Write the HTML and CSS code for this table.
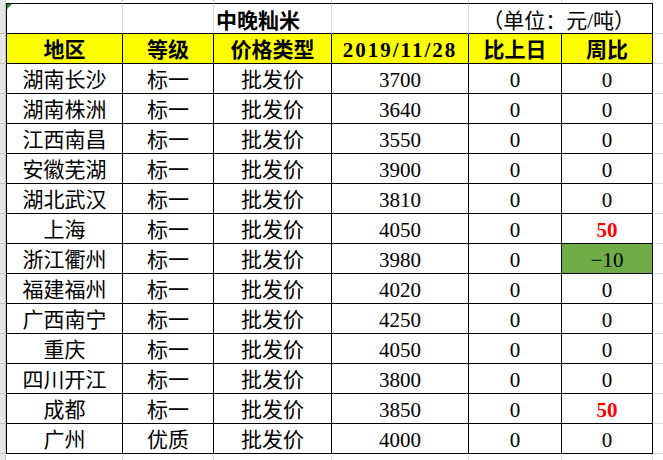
FILE: index.html
```html
<!DOCTYPE html>
<html lang="zh-CN">
<head>
<meta charset="utf-8">
<title>中晚籼米</title>
<link rel="stylesheet" href="styles.css">
</head>
<body>
<div class="sheet">
<table class="grid">
<colgroup>
<col class="c-strip"><col class="c-a"><col class="c-b"><col class="c-c"><col class="c-d"><col class="c-e"><col class="c-f"><col class="c-ext">
</colgroup>
<tr class="pre"><td class="strip"></td><td class="ca"></td><td></td><td></td><td></td><td></td><td></td><td class="ext"></td></tr>
<tr class="title"><td class="strip"></td><td class="ca flag"></td><td></td><td class="title-cell">中晚籼米</td><td></td><td colspan="2" class="unit">（单位：元/吨）</td><td class="ext"></td></tr>
<tr class="head"><td class="strip"></td><td class="ca">地区</td><td>等级</td><td>价格类型</td><td class="date">2019/11/28</td><td>比上日</td><td>周比</td><td class="ext"></td></tr>
<tr><td class="strip"></td><td class="ca">湖南长沙</td><td>标一</td><td>批发价</td><td>3700</td><td>0</td><td>0</td><td class="ext"></td></tr>
<tr><td class="strip"></td><td class="ca">湖南株洲</td><td>标一</td><td>批发价</td><td>3640</td><td>0</td><td>0</td><td class="ext"></td></tr>
<tr><td class="strip"></td><td class="ca">江西南昌</td><td>标一</td><td>批发价</td><td>3550</td><td>0</td><td>0</td><td class="ext"></td></tr>
<tr><td class="strip"></td><td class="ca">安徽芜湖</td><td>标一</td><td>批发价</td><td>3900</td><td>0</td><td>0</td><td class="ext"></td></tr>
<tr><td class="strip"></td><td class="ca">湖北武汉</td><td>标一</td><td>批发价</td><td>3810</td><td>0</td><td>0</td><td class="ext"></td></tr>
<tr><td class="strip"></td><td class="ca">上海</td><td>标一</td><td>批发价</td><td>4050</td><td>0</td><td class="up">50</td><td class="ext"></td></tr>
<tr><td class="strip"></td><td class="ca">浙江衢州</td><td>标一</td><td>批发价</td><td>3980</td><td>0</td><td class="down">−10</td><td class="ext"></td></tr>
<tr><td class="strip"></td><td class="ca">福建福州</td><td>标一</td><td>批发价</td><td>4020</td><td>0</td><td>0</td><td class="ext"></td></tr>
<tr><td class="strip"></td><td class="ca">广西南宁</td><td>标一</td><td>批发价</td><td>4250</td><td>0</td><td>0</td><td class="ext"></td></tr>
<tr><td class="strip"></td><td class="ca">重庆</td><td>标一</td><td>批发价</td><td>4050</td><td>0</td><td>0</td><td class="ext"></td></tr>
<tr><td class="strip"></td><td class="ca">四川开江</td><td>标一</td><td>批发价</td><td>3800</td><td>0</td><td>0</td><td class="ext"></td></tr>
<tr><td class="strip"></td><td class="ca">成都</td><td>标一</td><td>批发价</td><td>3850</td><td>0</td><td class="up">50</td><td class="ext"></td></tr>
<tr><td class="strip"></td><td class="ca">广州</td><td>优质</td><td>批发价</td><td>4000</td><td>0</td><td>0</td><td class="ext"></td></tr>
<tr class="post"><td class="strip"></td><td class="ca"></td><td></td><td></td><td></td><td></td><td></td><td class="ext"></td></tr>
</table>
</div>
</body>
</html>
```
FILE: styles.css
```css
html, body {
  margin: 0;
  padding: 0;
  background: #ffffff;
}

.sheet {
  width: 663px;
  height: 460px;
  overflow: hidden;
}

.grid {
  border-collapse: separate;
  border-spacing: 0;
  table-layout: fixed;
  width: 663px;
  font-family: "Liberation Serif", "Noto Sans CJK SC", serif;
  font-size: 21px;
  color: #000000;
}

.c-strip { width: 6px; }
.c-a { width: 117px; }
.c-b { width: 91px; }
.c-c { width: 118px; }
.c-d { width: 137px; }
.c-e { width: 93px; }
.c-f { width: 91px; }
.c-ext { width: 10px; }

.grid tr { height: 30px; }

.grid td {
  padding: 6px 0 0 0;
  line-height: 21px;
  vertical-align: top;
  text-align: center;
  white-space: nowrap;
  overflow: visible;
  border-right: 1px solid #000000;
  border-bottom: 1px solid #000000;
}

.grid td.ca {
  border-left: 1px solid #000000;
}

.grid td.strip {
  background: #e6e6e6;
  border-right: 1px solid #c4c4c4;
  border-bottom: 1px solid #c4c4c4;
  border-left: none;
  padding: 0;
}

.grid td.ext {
  border-right: none;
  border-bottom: 1px solid #d9d9d9;
  padding: 0;
}

/* partial row above the table */
.grid tr.pre { height: 3px; }
.grid tr.pre td {
  padding: 0;
  border-bottom: none;
  border-right: 1px solid #d9d9d9;
  line-height: 0;
}
.grid tr.pre td.ca { border-left: none; }
.grid tr.pre td.strip { border-right: 1px solid #c4c4c4; }
.grid tr.pre td.ext { border-right: none; }

/* partial row below the table */
.grid tr.post { height: 7px; }
.grid tr.post td {
  padding: 0;
  border-bottom: none;
  border-right: 1px solid #d9d9d9;
  line-height: 0;
}
.grid tr.post td.ca { border-left: none; }
.grid tr.post td.strip { border-right: 1px solid #c4c4c4; }
.grid tr.post td.ext { border-right: none; }

/* title row */
.grid tr.title { height: 31px; }
.grid tr.title td {
  border-top: 1px solid #000000;
  border-right-color: #d9d9d9;
  padding-top: 7px;
}
.grid tr.title td.strip,
.grid tr.title td.ext {
  border-top: none;
  padding-top: 0;
}
.grid tr.title td.strip { border-right-color: #c4c4c4; }
.grid tr.title td.unit {
  border-right-color: #000000;
  text-align: right;
  padding-right: 17px;
}
.grid tr.title td.title-cell {
  text-align: left;
  padding-left: 2px;
  font-weight: 700;
}

.flag { position: relative; }
.flag::before {
  content: "";
  position: absolute;
  left: 0;
  top: 0;
  width: 0;
  height: 0;
  border-top: 5px solid #1f8a3c;
  border-right: 5px solid transparent;
}

/* header row */
.grid tr.head td {
  background: #ffff00;
  font-weight: 700;
}
.grid tr.head td.strip { background: #e6e6e6; }
.grid tr.head td.ext { background: transparent; }
.grid tr.head td.date { letter-spacing: 2px; }

.up {
  color: #ff0000;
  font-weight: 700;
}

.grid td.down {
  background: #70ad47;
}
```
